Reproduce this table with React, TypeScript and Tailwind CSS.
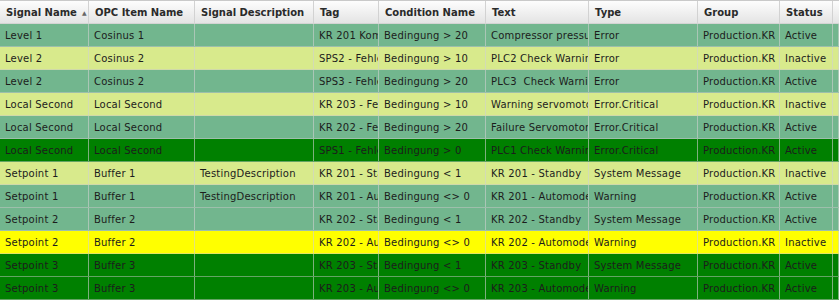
const columns = [
  'Signal Name',
  'OPC Item Name',
  'Signal Description',
  'Tag',
  'Condition Name',
  'Text',
  'Type',
  'Group',
  'Status',
  '',
];

type Row = {
  tone: 'mid' | 'light' | 'dark' | 'yellow';
  cells: string[];
};

const rows: Row[] = [
  { tone: 'mid', cells: ['Level 1', 'Cosinus 1', '', 'KR 201 Kompressor', 'Bedingung > 20', 'Compressor pressure', 'Error', 'Production.KR', 'Active'] },
  { tone: 'light', cells: ['Level 2', 'Cosinus 2', '', 'SPS2 - Fehler', 'Bedingung > 10', 'PLC2 Check Warning', 'Error', 'Production.KR', 'Inactive'] },
  { tone: 'mid', cells: ['Level 2', 'Cosinus 2', '', 'SPS3 - Fehler', 'Bedingung > 20', 'PLC3  Check Warning', 'Error', 'Production.KR', 'Active'] },
  { tone: 'light', cells: ['Local Second', 'Local Second', '', 'KR 203 - Fehler', 'Bedingung > 10', 'Warning servomotor', 'Error.Critical', 'Production.KR', 'Inactive'] },
  { tone: 'mid', cells: ['Local Second', 'Local Second', '', 'KR 202 - Fehler', 'Bedingung > 20', 'Failure Servomotor', 'Error.Critical', 'Production.KR', 'Active'] },
  { tone: 'dark', cells: ['Local Second', 'Local Second', '', 'SPS1 - Fehler', 'Bedingung > 0', 'PLC1 Check Warning', 'Error.Critical', 'Production.KR', 'Active'] },
  { tone: 'light', cells: ['Setpoint 1', 'Buffer 1', 'TestingDescription', 'KR 201 - Standby', 'Bedingung < 1', 'KR 201 - Standby', 'System Message', 'Production.KR', 'Inactive'] },
  { tone: 'mid', cells: ['Setpoint 1', 'Buffer 1', 'TestingDescription', 'KR 201 - Automode', 'Bedingung <> 0', 'KR 201 - Automode', 'Warning', 'Production.KR', 'Active'] },
  { tone: 'mid', cells: ['Setpoint 2', 'Buffer 2', '', 'KR 202 - Standby', 'Bedingung < 1', 'KR 202 - Standby', 'System Message', 'Production.KR', 'Active'] },
  { tone: 'yellow', cells: ['Setpoint 2', 'Buffer 2', '', 'KR 202 - Automode', 'Bedingung <> 0', 'KR 202 - Automode', 'Warning', 'Production.KR', 'Inactive'] },
  { tone: 'dark', cells: ['Setpoint 3', 'Buffer 3', '', 'KR 203 - Standby', 'Bedingung < 1', 'KR 203 - Standby', 'System Message', 'Production.KR', 'Active'] },
  { tone: 'dark', cells: ['Setpoint 3', 'Buffer 3', '', 'KR 203 - Automode', 'Bedingung <> 0', 'KR 203 - Automode', 'Warning', 'Production.KR', 'Active'] },
];

const toneClass = {
  mid: 'bg-[#72b68e]',
  light: 'bg-[#d8ea8c]',
  dark: 'bg-[#008000]',
  yellow: 'bg-[#ffff00]',
};

const gridCols = 'grid grid-cols-[89px_106px_119px_65px_107px_103px_109px_82px_53px_6px]';

const App = () => {
  return (
    <div className="w-[839px] h-[300px] overflow-hidden bg-white font-['DejaVu_Sans',sans-serif] text-[10px] text-[#1c1c1c]">
      {/* Header */}
      <div className={`${gridCols} h-[24px] border-t border-[#c9c9c9] border-b border-b-[#d4d4d4] bg-gradient-to-b from-[#fdfdfd] to-[#e4e4e4]`}>
        {columns.map((col, i) => (
          <div
            key={i}
            className="flex items-center gap-[5px] px-[6px] border-r border-[#d2d2d2] font-bold text-[#2a2a2a] whitespace-nowrap overflow-hidden"
          >
            <span>{col}</span>
            {i === 0 && <span className="text-[6px] text-[#666]">▲</span>}
          </div>
        ))}
      </div>

      {/* Rows */}
      {rows.map((row, r) => (
        <div key={r} className={`${gridCols} h-[23px] border-b border-[#c8c8c8]/50 ${toneClass[row.tone]}`}>
          {[...row.cells, ''].map((cell, c) => (
            <div
              key={c}
              className="flex items-center pl-[5px] border-r border-[#d0d0d0]/60 tracking-[0.2px] whitespace-pre overflow-hidden"
            >
              {cell}
            </div>
          ))}
        </div>
      ))}
    </div>
  );
};

export default App;
